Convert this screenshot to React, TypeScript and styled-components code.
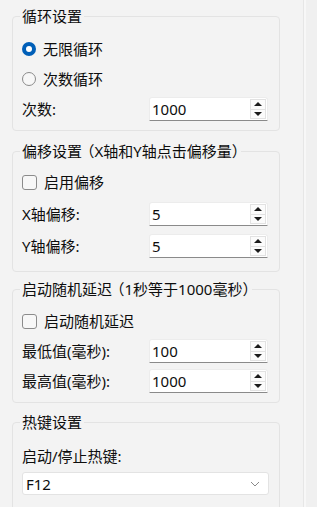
import React from "react";
import styled, { createGlobalStyle, css } from "styled-components";

const GlobalStyle = createGlobalStyle`
  html, body {
    margin: 0;
    padding: 0;
    background: #f3f3f3;
  }
  body {
    font-family: "Noto Sans", "Noto Sans CJK SC", sans-serif;
    font-size: 15px;
    color: #0d0d0d;
  }
  * { box-sizing: border-box; }
`;

const Page = styled.div`
  display: flex;
  width: 317px;
  height: 507px;
  overflow: hidden;
  background: #f3f3f3;
`;

const Main = styled.div`
  width: 303px;
  flex: none;
  display: flex;
  flex-direction: column;
  padding: 16px 0 0 12px;
`;

const Splitter = styled.div`
  width: 3px;
  flex: none;
  background: #f7f7f7;
  border-left: 1px solid #e6e6e6;
`;

const Side = styled.div`
  flex: 1;
  background: #f0f0f0;
`;

const Group = styled.section<{ $mt: number; $pt: number; $pb: number; $row: number }>`
  --row-h: ${(p) => p.$row}px;
  position: relative;
  width: 268px;
  flex: none;
  margin-top: ${(p) => p.$mt}px;
  border: 1px solid #e3e3e3;
  border-radius: 4px;
  padding: ${(p) => p.$pt}px 10px ${(p) => p.$pb}px 9px;
  display: flex;
  flex-direction: column;
`;

const GroupTitle = styled.div`
  position: absolute;
  top: -11px;
  left: 7px;
  padding: 0 2px;
  line-height: 20px;
  background: #f3f3f3;
  white-space: nowrap;
  font-feature-settings: "halt";
`;

const Note = styled.span`
  margin-left: 5px;
`;

const Row = styled.div`
  display: flex;
  align-items: center;
  height: var(--row-h);
  gap: 7px;
`;

const FieldRow = styled.div`
  display: grid;
  grid-template-columns: 127px 1fr;
  align-items: center;
  height: var(--row-h);
`;

const Label = styled.span`
  line-height: 20px;
  white-space: nowrap;
`;

const Radio = styled.span<{ $checked?: boolean }>`
  width: 14px;
  height: 14px;
  border-radius: 50%;
  flex: none;
  position: relative;
  ${(p) =>
    p.$checked
      ? css`
          background: #005fb8;
          &::after {
            content: "";
            position: absolute;
            left: 4px;
            top: 4px;
            width: 6px;
            height: 6px;
            border-radius: 50%;
            background: #ffffff;
          }
        `
      : css`
          background: #f7f7f7;
          border: 1px solid #8b8b8b;
        `}
`;

const Checkbox = styled.span`
  width: 15px;
  height: 15px;
  flex: none;
  border-radius: 3px;
  border: 1px solid #8b8b8b;
  background: #f7f7f7;
`;

const SpinBox = styled.div`
  display: flex;
  align-items: center;
  height: 24px;
  width: 119px;
  background: #ffffff;
  border: 1px solid #ececec;
  border-bottom: 1px solid #8a8a8a;
  border-radius: 3px 3px 0 0;
  padding: 0 1px 0 2px;
`;

const SpinValue = styled.span`
  flex: 1;
  line-height: 20px;
`;

const SpinButtons = styled.div`
  display: flex;
  flex-direction: column;
  width: 16px;
  height: 20px;
`;

const SpinButton = styled.div`
  flex: 1;
  display: flex;
  align-items: center;
  justify-content: center;
  background: #fbfbfb;
  border: 1px solid #e2e2e2;
  & + & {
    border-top: none;
  }
`;

const Triangle = styled.span<{ $down?: boolean }>`
  width: 0;
  height: 0;
  border-left: 4px solid transparent;
  border-right: 4px solid transparent;
  ${(p) =>
    p.$down
      ? css`border-top: 4px solid #1b1b1b;`
      : css`border-bottom: 4px solid #1b1b1b;`}
`;

const Combo = styled.div`
  display: flex;
  align-items: center;
  height: 23px;
  width: 100%;
  margin-top: 2px;
  background: #ffffff;
  border: 1px solid #e3e3e3;
  border-radius: 3px;
  padding: 0 8px 0 3px;
`;

const ComboValue = styled.span`
  flex: 1;
  line-height: 20px;
`;

const Spin = ({ value }: { value: string }) => (
  <SpinBox>
    <SpinValue>{value}</SpinValue>
    <SpinButtons>
      <SpinButton>
        <Triangle />
      </SpinButton>
      <SpinButton>
        <Triangle $down />
      </SpinButton>
    </SpinButtons>
  </SpinBox>
);

const Chevron = () => (
  <svg width="10" height="6" viewBox="0 0 10 6" fill="none">
    <path d="M1 1l4 4 4-4" stroke="#8a8a8a" strokeWidth="1" />
  </svg>
);

export default function App() {
  return (
    <>
      <GlobalStyle />
      <Page>
        <Main>
          <Group $mt={0} $pt={17} $pb={6} $row={30}>
            <GroupTitle>循环设置</GroupTitle>
            <Row>
              <Radio $checked />
              <Label>无限循环</Label>
            </Row>
            <Row>
              <Radio />
              <Label>次数循环</Label>
            </Row>
            <FieldRow>
              <Label>次数:</Label>
              <Spin value="1000" />
            </FieldRow>
          </Group>

          <Group $mt={20} $pt={14} $pb={9} $row={32}>
            <GroupTitle>
              偏移设置<Note>（X轴和Y轴点击偏移量）</Note>
            </GroupTitle>
            <Row>
              <Checkbox />
              <Label>启用偏移</Label>
            </Row>
            <FieldRow>
              <Label>X轴偏移:</Label>
              <Spin value="5" />
            </FieldRow>
            <FieldRow>
              <Label>Y轴偏移:</Label>
              <Spin value="5" />
            </FieldRow>
          </Group>

          <Group $mt={17} $pt={16} $pb={6} $row={30}>
            <GroupTitle>
              启动随机延迟<Note>（1秒等于1000毫秒）</Note>
            </GroupTitle>
            <Row>
              <Checkbox />
              <Label>启动随机延迟</Label>
            </Row>
            <FieldRow>
              <Label>最低值(毫秒):</Label>
              <Spin value="100" />
            </FieldRow>
            <FieldRow>
              <Label>最高值(毫秒):</Label>
              <Spin value="1000" />
            </FieldRow>
          </Group>

          <Group $mt={19} $pt={19} $pb={30} $row={28}>
            <GroupTitle>热键设置</GroupTitle>
            <Row>
              <Label>启动/停止热键:</Label>
            </Row>
            <Combo>
              <ComboValue>F12</ComboValue>
              <Chevron />
            </Combo>
          </Group>
        </Main>
        <Splitter />
        <Side />
      </Page>
    </>
  );
}
